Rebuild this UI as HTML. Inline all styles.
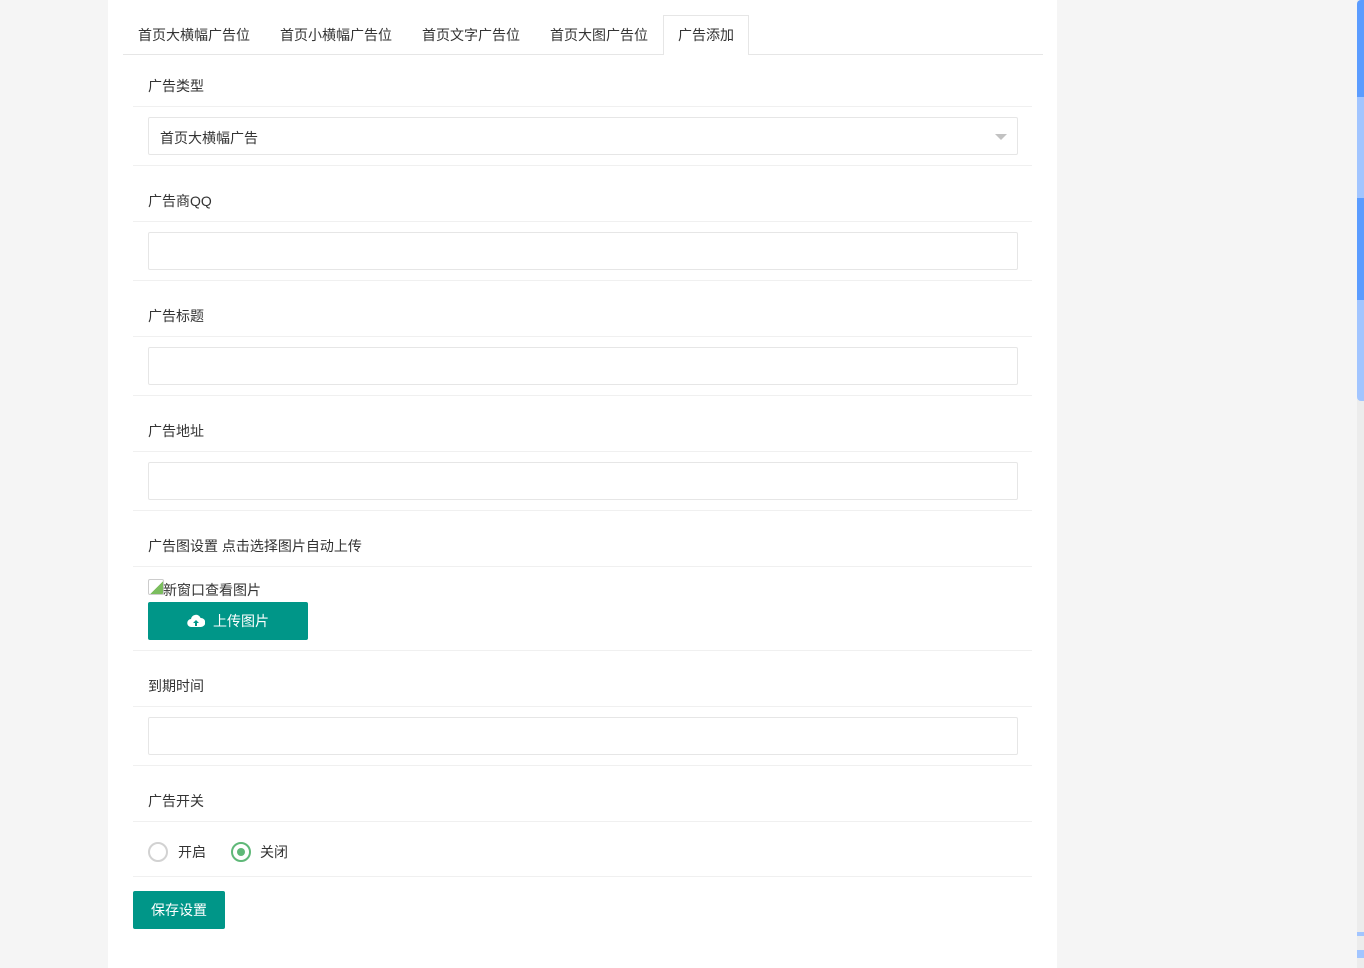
<!DOCTYPE html>
<html><head><meta charset="utf-8"><style>
*{margin:0;padding:0;box-sizing:border-box}
body{width:1364px;height:968px;background:#f5f5f5;font-family:"Liberation Sans","Noto Sans CJK SC",sans-serif;font-size:14px;color:#333;position:relative;overflow:hidden}
.panel{position:absolute;left:108px;top:0;width:949px;height:968px;background:#fff}
.a{position:absolute}
.tab{position:absolute;top:26px;font-size:14px;color:#333;line-height:18px}
.hl{position:absolute;left:133px;width:899px;height:1px;background:#f0f0f0}
.lbl{position:absolute;left:148px;font-size:14px;color:#333;line-height:18px}
.inp{position:absolute;left:148px;width:870px;height:38px;border:1px solid #e6e6e6;border-radius:2px;background:#fff}
.btn{position:absolute;background:#009688;color:#fff;border-radius:2px;text-align:center;font-size:14px}
.sb{position:absolute;left:1357px;width:7px}
</style></head><body>
<div class="panel"></div>
<div class="a" style="left:123px;top:54px;width:920px;height:1px;background:#e6e6e6"></div>
<div class="a" style="left:663px;top:15px;width:86px;height:40px;border:1px solid #e6e6e6;border-bottom:none;background:#fff"></div>
<div class="tab" style="left:138px">首页大横幅广告位</div>
<div class="tab" style="left:280px">首页小横幅广告位</div>
<div class="tab" style="left:422px">首页文字广告位</div>
<div class="tab" style="left:550px">首页大图广告位</div>
<div class="tab" style="left:678px">广告添加</div>

<div class="lbl" style="top:77px">广告类型</div><div class="hl" style="top:106px"></div>
<div class="inp" style="top:117px"><span class="a" style="left:11px;top:10px;color:#333">首页大横幅广告</span><span class="a" style="right:10px;top:16px;width:0;height:0;border-left:6px solid transparent;border-right:6px solid transparent;border-top:6px solid #c2c2c2"></span></div>
<div class="hl" style="top:165px"></div>

<div class="lbl" style="top:192px">广告商QQ</div><div class="hl" style="top:221px"></div>
<div class="inp" style="top:232px"></div><div class="hl" style="top:280px"></div>

<div class="lbl" style="top:307px">广告标题</div><div class="hl" style="top:336px"></div>
<div class="inp" style="top:347px"></div><div class="hl" style="top:395px"></div>

<div class="lbl" style="top:422px">广告地址</div><div class="hl" style="top:451px"></div>
<div class="inp" style="top:462px"></div><div class="hl" style="top:510px"></div>

<div class="lbl" style="top:537px">广告图设置 点击选择图片自动上传</div><div class="hl" style="top:566px"></div>
<div class="a" style="left:148px;top:579px;width:16px;height:16px;border:1px solid #ccc;border-radius:2px;background:linear-gradient(135deg,#fff 55%,#7bbd5e 55%)"></div>
<div class="lbl" style="top:581px;left:163px">新窗口查看图片</div>
<div class="btn" style="left:148px;top:602px;width:160px;height:38px;line-height:38px"><svg width="18" height="14" viewBox="0 0 18 14" style="vertical-align:-2px;margin-right:8px"><path d="M4.5 13A4 4 0 0 1 4 5a5 5 0 0 1 9.6-1A4.5 4.5 0 0 1 14 13z" fill="#fff"/><path d="M9 6l-3 3h2v3h2V9h2z" fill="#009688"/></svg>上传图片</div>
<div class="hl" style="top:650px"></div>

<div class="lbl" style="top:677px">到期时间</div><div class="hl" style="top:706px"></div>
<div class="inp" style="top:717px"></div><div class="hl" style="top:765px"></div>

<div class="lbl" style="top:792px">广告开关</div><div class="hl" style="top:821px"></div>
<div class="a" style="left:148px;top:842px;width:20px;height:20px;border:2px solid #d2d2d2;border-radius:50%"></div>
<div class="lbl" style="left:178px;top:843px">开启</div>
<div class="a" style="left:231px;top:842px;width:20px;height:20px;border:2px solid #5fb878;border-radius:50%"><div class="a" style="left:4px;top:4px;width:8px;height:8px;border-radius:50%;background:#5fb878"></div></div>
<div class="lbl" style="left:260px;top:843px">关闭</div>
<div class="hl" style="top:876px"></div>
<div class="btn" style="left:133px;top:891px;width:92px;height:38px;line-height:38px">保存设置</div>

<div class="sb" style="top:0;height:968px;background:#ececec"></div>
<div class="sb" style="top:0;height:97px;background:#5b9cff;border-radius:4px 0 0 0"></div>
<div class="sb" style="top:97px;height:101px;background:#a2c5ff"></div>
<div class="sb" style="top:198px;height:102px;background:#5b9cff"></div>
<div class="sb" style="top:300px;height:101px;background:#a2c5ff;border-radius:0 0 0 4px"></div>
<div class="sb" style="top:932px;height:4px;background:#a2c5ff"></div>
<div class="sb" style="top:950px;height:8px;background:#a2c5ff"></div>
</body></html>
